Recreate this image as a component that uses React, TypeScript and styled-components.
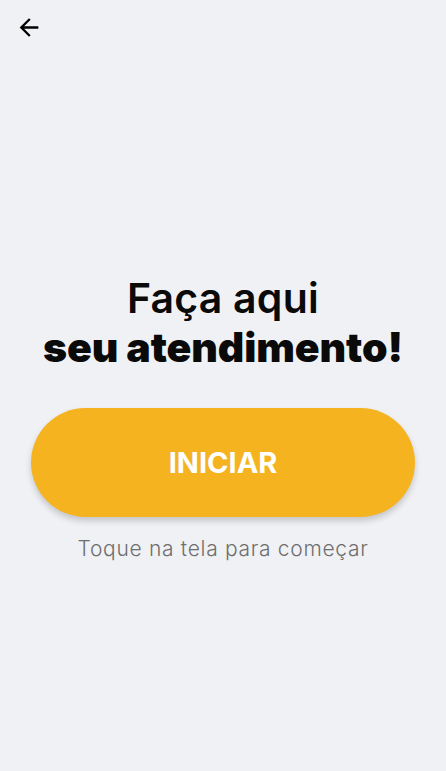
import React from "react";
import styled, { createGlobalStyle } from "styled-components";
import { MdArrowBack } from "react-icons/md";

const Global = createGlobalStyle`
  html, body { margin: 0; padding: 0; background: #f0f1f5; }
  * { box-sizing: border-box; }
`;

const Screen = styled.div`
  width: 446px;
  height: 771px;
  background: #f0f1f5;
  display: flex;
  flex-direction: column;
  font-family: "Inter", "Noto Sans", sans-serif;
  overflow: hidden;
`;

const TopBar = styled.div`
  height: 56px;
  padding: 13px 0 0 15px;
  display: flex;
  align-items: flex-start;
`;

const BackButton = styled.button`
  border: none;
  background: transparent;
  padding: 0;
  width: 28px;
  height: 28px;
  display: flex;
  align-items: center;
  justify-content: center;
  color: #000;
  cursor: pointer;
`;

const Content = styled.div`
  display: flex;
  flex-direction: column;
  align-items: center;
  padding: 218px 30px 0 30px;
`;

const Title = styled.h1`
  margin: 0;
  text-align: center;
  color: #0a0a0a;
  font-size: 41px;
  line-height: 49px;
`;

const TitleLine = styled.span<{ $weight: number; $spacing: number }>`
  display: block;
  font-weight: ${(p) => p.$weight};
  letter-spacing: ${(p) => p.$spacing}px;
`;

const StartButton = styled.button`
  margin-top: 36px;
  width: 384px;
  height: 109px;
  border: none;
  border-radius: 55px;
  background: #f5b320;
  color: #ffffff;
  font-family: "Inter", "Noto Sans", sans-serif;
  font-weight: 700;
  font-size: 29px;
  box-shadow: 0 4px 6px rgba(0, 0, 0, 0.18);
  cursor: pointer;
`;

const Hint = styled.p`
  margin: 20px 0 0 0;
  color: #6e6e6e;
  font-size: 21px;
  font-weight: 300;
  line-height: 24px;
  letter-spacing: 0.7px;
`;

export default function App() {
  return (
    <>
      <Global />
      <Screen>
        <TopBar>
          <BackButton aria-label="Voltar">
            <MdArrowBack size={29} />
          </BackButton>
        </TopBar>
        <Content>
          <Title>
            <TitleLine $weight={600} $spacing={0.2}>Faça aqui</TitleLine>
            <TitleLine $weight={900} $spacing={-0.1}>seu atendimento!</TitleLine>
          </Title>
          <StartButton>INICIAR</StartButton>
          <Hint>Toque na tela para começar</Hint>
        </Content>
      </Screen>
    </>
  );
}
